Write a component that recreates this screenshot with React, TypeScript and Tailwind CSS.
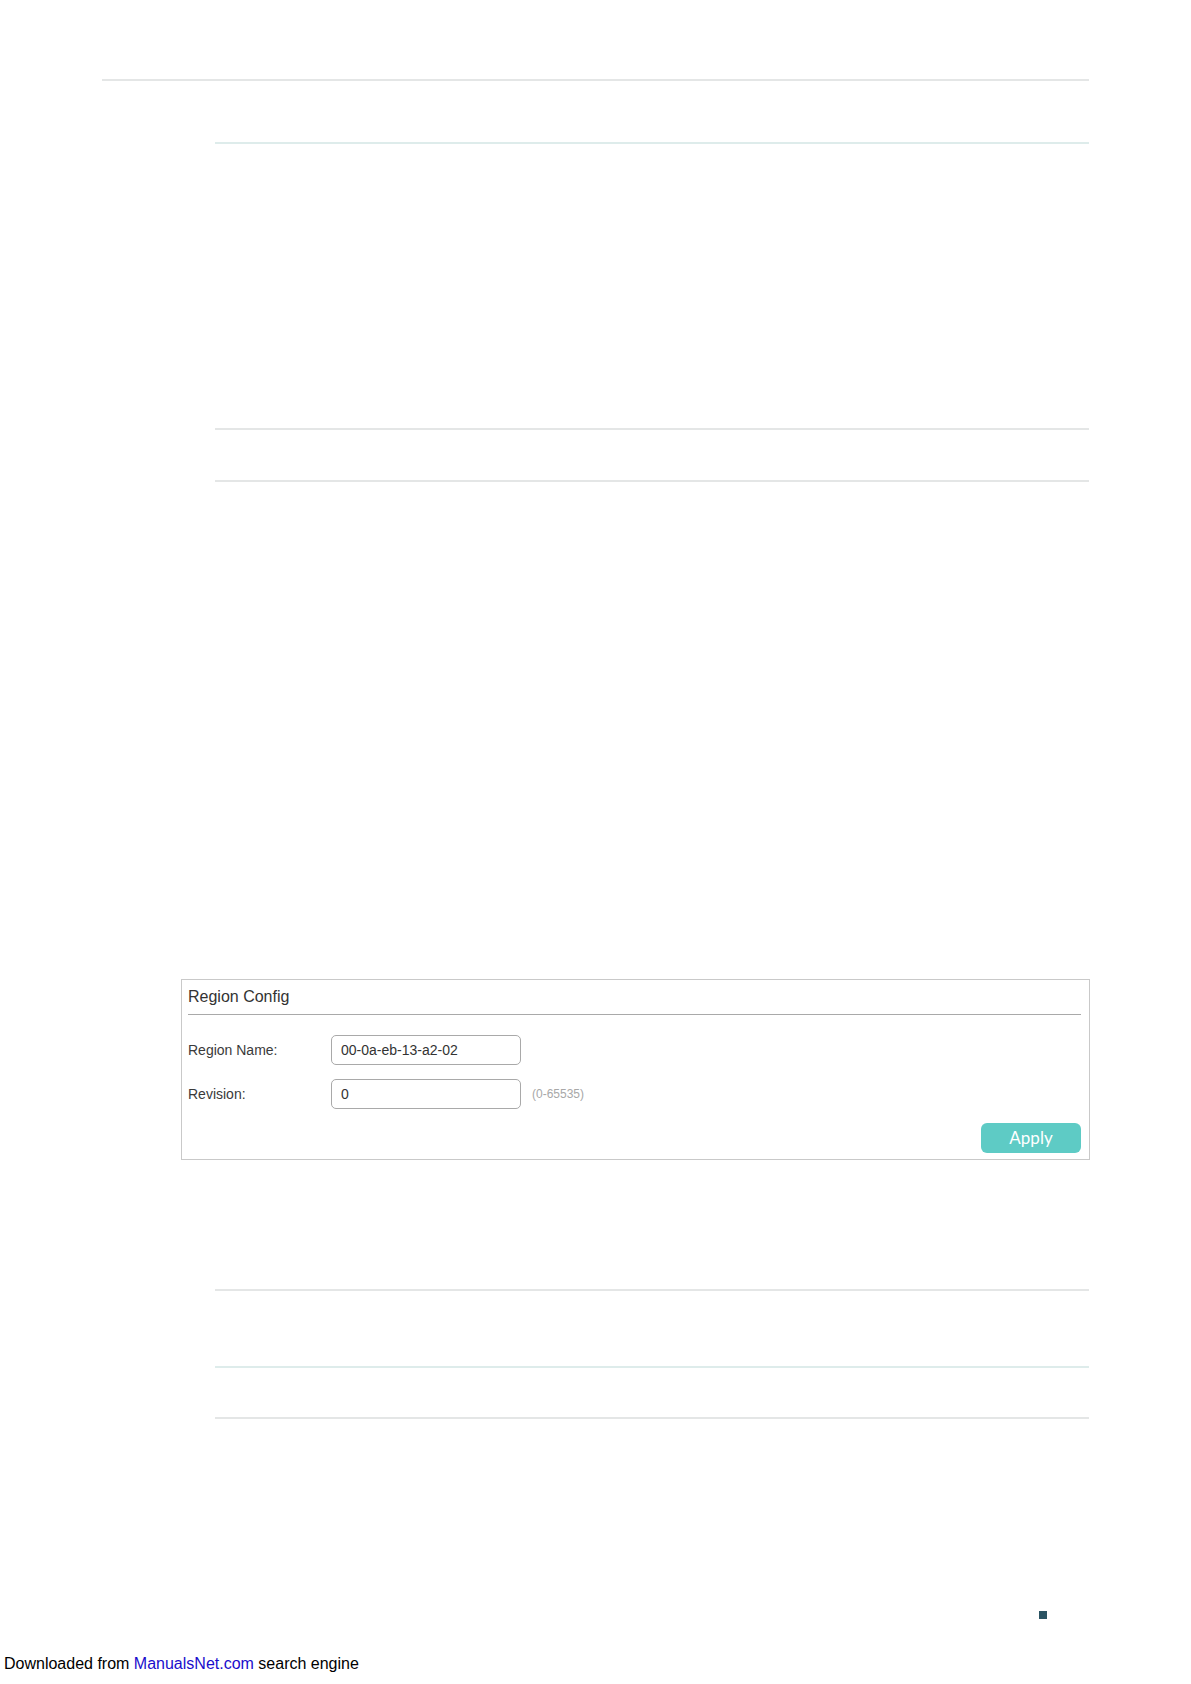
import React from 'react';

const arial = "font-['Liberation_Sans',Arial,sans-serif]";

function Rule({ indent, teal }: { indent: 'wide' | 'narrow'; teal?: boolean }) {
  return (
    <div
      className={`h-[2px] ${teal ? 'bg-[#deeceb]' : 'bg-[#e4e6e6]'} ${
        indent === 'wide' ? 'ml-[102px] w-[987px]' : 'ml-[215px] w-[874px]'
      }`}
    />
  );
}

function RegionConfig() {
  return (
    <div className={`ml-[181px] w-[909px] border border-[#c9c9c9] bg-white ${arial}`}>
      <div className="h-[34px] flex items-center pl-[6px] text-[16px] text-[#333]">Region Config</div>
      <div className="ml-[6px] mr-[8px] h-px bg-[#a9a9a9]" />

      <div className="mt-[20px] flex items-center h-[30px] pl-[6px]">
        <label className="w-[143px] text-[14px] text-[#3a3a3a]">Region Name:</label>
        <input
          readOnly
          value="00-0a-eb-13-a2-02"
          className="w-[190px] h-[30px] border border-[#a9a9a9] rounded-[5px] px-[9px] text-[14px] text-[#333] outline-none"
        />
      </div>

      <div className="mt-[14px] flex items-center h-[30px] pl-[6px]">
        <label className="w-[143px] text-[14px] text-[#3a3a3a]">Revision:</label>
        <input
          readOnly
          value="0"
          className="w-[190px] h-[30px] border border-[#a9a9a9] rounded-[5px] px-[9px] text-[14px] text-[#333] outline-none"
        />
        <span className="ml-[11px] text-[12px] text-[#a8a8a8]">(0-65535)</span>
      </div>

      <div className="mt-[14px] mb-[6px] flex justify-end pr-[8px]">
        <button className="w-[100px] h-[30px] rounded-[6px] bg-[#5ecbc5] text-white text-[17px] font-['Lato',sans-serif]">
          Apply
        </button>
      </div>
    </div>
  );
}

export default function App() {
  return (
    <div className="w-[1191px] h-[1684px] bg-white overflow-hidden">
      <div className="pt-[79px]">
        <Rule indent="wide" />
        <div className="mt-[61px]">
          <Rule indent="narrow" teal />
        </div>
        <div className="mt-[284px]">
          <Rule indent="narrow" />
        </div>
        <div className="mt-[50px]">
          <Rule indent="narrow" />
        </div>

        <div className="mt-[497px]">
          <RegionConfig />
        </div>

        <div className="mt-[129px]">
          <Rule indent="narrow" />
        </div>
        <div className="mt-[75px]">
          <Rule indent="narrow" teal />
        </div>
        <div className="mt-[49px]">
          <Rule indent="narrow" />
        </div>

        {/* page marker */}
        <div className="mt-[192px] ml-[1039px] w-[8px] h-[8px] bg-[#2b5463]" />

        <p className={`mt-[36px] ml-[4px] text-[16px] leading-[18px] text-black ${arial}`}>
          Downloaded from <span className="text-[#1a0dcc]">ManualsNet.com</span> search engine
        </p>
      </div>
    </div>
  );
}
